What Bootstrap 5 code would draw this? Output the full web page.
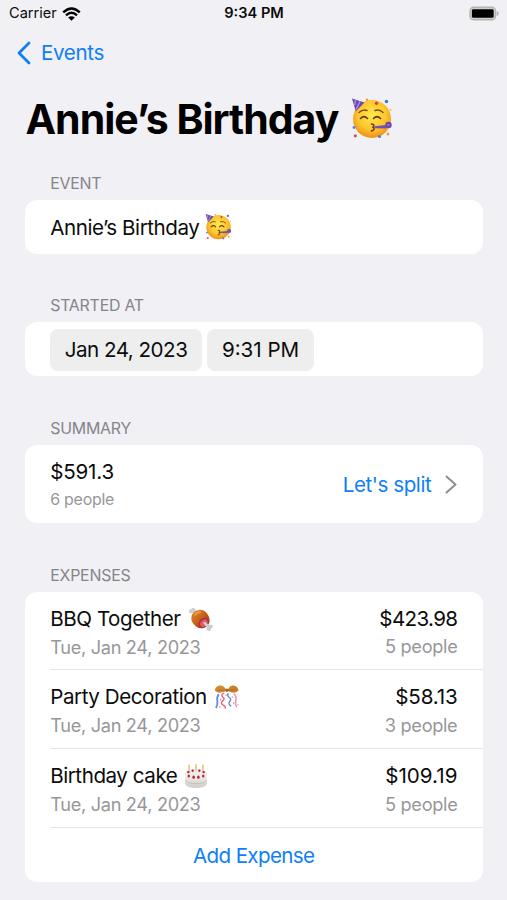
<!DOCTYPE html>
<html lang="en">
<head>
<meta charset="utf-8">
<meta name="viewport" content="width=device-width, initial-scale=1">
<title>Annie’s Birthday</title>
<link href="https://cdn.jsdelivr.net/npm/bootstrap@5.3.0/dist/css/bootstrap.min.css" rel="stylesheet">
<style>
  body { background: #f1f0f5; color: #0c0c0c; font-family: Inter, "Liberation Sans", sans-serif; font-size: 20.6px; line-height: 1.2; letter-spacing: -.45px; overflow: hidden; }
  svg { display: block; flex: none; }
  .tint { color: #0f7ff5; }
  .muted-text { color: #97979a; }
  .statusbar { height: 27px; padding: 1px 8px 0 9px; font-size: 14.6px; letter-spacing: 0; }
  .statusbar > div { flex: 1 1 0; }
  .wifi { margin: -1px 0 0 5px; }
  .battery { margin-top: -1px; }
  .clock { font-weight: 600; }
  .topnav { height: 52px; padding-left: 17px; letter-spacing: -.35px; }
  .topnav span { margin-left: 10px; }
  .page-title { height: 81px; padding-left: 25.5px; font-size: 41px; font-weight: 700; letter-spacing: -1px; color: #000; }
  .page-title svg { margin: -3px 0 0 12.5px; }
  .page-body { padding: 0 24.4px 0 24.8px; }
  .section-label { height: 68.7px; padding: 0 25.4px 6px; font-size: 15.9px; line-height: 20px; letter-spacing: -.22px; color: #858589; }
  .section-label.first { height: 40px; }
  .panel { background: #fff; border-radius: 12px; }
  .panel-row { padding: 2px 25.4px 0; height: 53.8px; }
  .panel-row.tall { height: 78px; }
  .emoji-near { margin: -3px 0 0 6px; }
  .panel-row.pickers { gap: 5.5px; padding-top: 1px; }
  .pill { background: #eee; border-radius: 8px; height: 42px; padding: 1px 14.5px 0; }
  .pill.date { letter-spacing: -.5px; }
  .expense { margin-left: 25.4px; padding: 3px 25.2px 0 0; height: 78.7px; border-bottom: 1px solid #e6e6e8; }
  .lines { gap: 4px; }
  .summary { gap: 5px; }
  .emoji-after { margin: 0 0 0 7px; }
  .chevron { margin-left: 14px; }
  .sub { font-size: 18.2px; letter-spacing: -.32px; line-height: 22px; }
  .sub-sm { font-size: 15.9px; letter-spacing: -.22px; line-height: 20px; }
  .wide { letter-spacing: 0; }
  .semi { letter-spacing: -.2px; }
  .tight { letter-spacing: -.65px; }
  .add-row { padding-top: 3px; }
</style>
</head>
<body>
<svg width="0" height="0" class="position-absolute" aria-hidden="true">
  <defs>
    <radialGradient id="skin" cx=".5" cy=".4" r=".62"><stop offset="0" stop-color="#ffe94f"/><stop offset=".6" stop-color="#fdc72d"/><stop offset="1" stop-color="#ee8a16"/></radialGradient>
    <linearGradient id="meat" x1="0" y1="0" x2="1" y2="1"><stop offset="0" stop-color="#e08a2c"/><stop offset=".5" stop-color="#c4611a"/><stop offset="1" stop-color="#7c2b12"/></linearGradient>
    <linearGradient id="cream" x1="0" y1="0" x2="0" y2="1"><stop offset="0" stop-color="#f6f3ee"/><stop offset="1" stop-color="#cfcbc8"/></linearGradient>
    <symbol id="party-face" viewBox="0 0 42 42">
      <circle cx="21" cy="22" r="19" fill="url(#skin)"/>
      <path d="M1 1.500 13.500 5.500 4.800 14.500Z" fill="#6a49ae"/>
      <path d="M4.500 2.800 3.800 8M9 4.200 5.200 12.500" stroke="#a98be0" stroke-width="1.500"/>
      <path d="M8 15.500q4-3.500 8-2M24 13.500q4.500-1.500 8 2" fill="none" stroke="#7d4a10" stroke-width="1.400" stroke-linecap="round"/>
      <path d="M9.500 21.500q3.500-3.500 7 0M22.500 21.500q3.500-3.500 7 0" fill="none" stroke="#6f3c0a" stroke-width="1.700" stroke-linecap="round"/>
      <path d="M20.500 27q4 .3 1.500 3 3 2-1.500 4" fill="none" stroke="#7a3709" stroke-width="1.600" stroke-linecap="round"/>
      <path d="M23.500 29.300 35 28v3.500l-11.500-.3Z" fill="#7351b3"/>
      <circle cx="37.500" cy="28" r="3.200" fill="#6848a8"/><circle cx="37.500" cy="28" r="1.300" fill="#8f70cf"/>
      <circle cx="35.500" cy="4.500" r="1.700" fill="#2e79d8"/><circle cx="25.500" cy="6.300" r="1.700" fill="#e0404c"/>
      <circle cx="16" cy="2.800" r="1.200" fill="#f79a35"/><circle cx="3" cy="30.500" r="1.400" fill="#3d8be0"/>
      <circle cx="4.300" cy="38.800" r="1.600" fill="#e0475a"/><circle cx="28.500" cy="39.500" r="1.500" fill="#4a78d8"/>
      <circle cx="37" cy="37" r="1.500" fill="#f79a35"/><circle cx="39.500" cy="13" r="1" fill="#f2c045"/>
    </symbol>
    <symbol id="meat-bone" viewBox="0 0 26 26">
      <path d="M.5 5q-.5-3 2-2.500Q3.500 0 6 1q2 1 1.500 3l3 2.500-3 2L5 6Q1.500 8 .5 5Z" fill="#d2d0ce"/>
      <path d="M3 11Q4 3.500 11 3q5.500-.3 8.500 4 3.500 5 2 9.500-2 5-7 5.500Q9 22.500 5.500 18 2.500 15 3 11Z" fill="url(#meat)"/>
      <ellipse cx="15.800" cy="16.500" rx="6" ry="4.800" transform="rotate(-42 15.800 16.500)" fill="#b92d3e"/>
      <ellipse cx="16" cy="16.800" rx="4.300" ry="3.200" transform="rotate(-42 16 16.800)" fill="#dc5c68"/>
      <path d="M15 16.500 17.300 15.300 21 18.700q3.500-1 4.500 1 .3 2-2 2.300 .2 3-2.300 3-3-.5-2.200-3.800Z" fill="#d0cdca"/>
      <path d="M7 8q2-3 5-2.500" fill="none" stroke="#eca04d" stroke-width="2" stroke-linecap="round"/>
    </symbol>
    <symbol id="confetti-ball" viewBox="0 0 26 26">
      <path d="M12.500 5.500Q10 0 5 .6 .8 1.500.3 5.800 3 8.800 7 7.800q4-.3 5.500-2.300Z" fill="#d08a2f"/>
      <path d="M13.500 5.500Q16 0 20 .6q4.700 1 5 5.200-3 3-6.500 2-3.500-.3-5-2.300Z" fill="#c98028"/>
      <path d="M3 5.800q4-1.500 8-.2M15.500 5.600q4-1.500 7.500.2" fill="none" stroke="#9f621b" stroke-width=".6"/>
      <circle cx="13" cy="5.500" r="1.800" fill="#a86719"/>
      <path d="M4.500 9.500Q2 13 3 17q.5 4-1.500 7" fill="none" stroke="#5b8df0" stroke-width="1.900"/>
      <path d="M10 8.500q-4 1.500-1.500 4 3 2 0 4-3 2.500.5 4.500 3 1.500 2 3.500" fill="none" stroke="#ec6386" stroke-width="1.500"/>
      <path d="M14.500 8.500q-2 2.500 .8 4.500 3 2 .2 4.500-1.500 3 2 4.500" fill="none" stroke="#5688e6" stroke-width="1.400"/>
      <path d="M20 9q3.500 3 2 7-.5 4 1 7" fill="none" stroke="#ef8fac" stroke-width="1.500"/>
      <path d="M12 10v1.500M6.500 14v2M18.500 12v1.500M20 18v2M5.500 22v2M24.500 20v1" stroke="#ea7d93" stroke-width="1.100"/>
    </symbol>
    <symbol id="cake" viewBox="0 0 24 26">
      <path d="M.5 10v10.500q2 4.500 11.500 4.500t11.500-4.500V10Z" fill="url(#cream)"/>
      <ellipse cx="12" cy="10" rx="11.500" ry="5" fill="#efebe6"/>
      <path d="M1 17q2.500 3.500 11 3.500T23 17" fill="none" stroke="#bcb8b5" stroke-width=".8"/>
      <path d="M4.800 4v4M19.200 4v4M12 3v4" stroke="#e6b5a5" stroke-width="1.400"/>
      <path d="M4.800 1.500v2.500M12 1v2.500M19.200 1.500v2.500" stroke="#f0c765" stroke-width="1.800" stroke-linecap="round"/>
      <g fill="#b01f38"><circle cx="4" cy="8.500" r="1.200"/><circle cx="8.500" cy="7" r="1.200"/><circle cx="15.500" cy="7" r="1.200"/><circle cx="20" cy="8.500" r="1.200"/><ellipse cx="4.500" cy="12.500" rx="1.200" ry="1.600"/><ellipse cx="9.500" cy="13.700" rx="1.300" ry="1.700"/><ellipse cx="14.500" cy="13.700" rx="1.300" ry="1.700"/><ellipse cx="19.500" cy="12.500" rx="1.200" ry="1.600"/></g>
    </symbol>
  </defs>
</svg>

<header>
  <div class="statusbar d-flex align-items-center">
    <div class="d-flex align-items-center">
      <span>Carrier</span>
      <svg class="wifi" width="19" height="14" viewBox="0 0 19 14" fill="none" stroke="#000" stroke-width="2.400"><path d="M1.200 5.300Q9.500-2.500 17.800 5.300M4 8.300q5.500-4.900 11 0"/><path d="M6.200 10.600q3.300-2.700 6.600 0L9.500 13.800Z" fill="#000" stroke="none"/></svg>
    </div>
    <span class="clock">9:34 PM</span>
    <div class="d-flex justify-content-end">
      <svg class="battery" width="30" height="15" viewBox="0 0 31 15"><rect x="1" y="1" width="26.500" height="13" rx="4" fill="#d0d0d0" stroke="#b4b4b3" stroke-width="1.400"/><rect x="3" y="3" width="22.500" height="9" rx="1.500"/><path d="M28.800 5q2 .8 2 2.500t-2 2.500Z" fill="#b4b4b3"/></svg>
    </div>
  </div>
  <nav class="topnav d-flex align-items-center tint">
    <svg width="14" height="24" viewBox="0 0 14 24" fill="none" stroke="currentColor" stroke-width="2.800" stroke-linecap="round" stroke-linejoin="round"><path d="M12 2 2 12l10 10"/></svg>
    <span>Events</span>
  </nav>
  <h1 class="page-title d-flex align-items-center m-0">
    <span>Annie’s Birthday</span>
    <svg width="42" height="42"><use href="#party-face"/></svg>
  </h1>
</header>

<main class="page-body">
  <div class="section-label first d-flex align-items-end">EVENT</div>
  <section class="panel panel-row d-flex align-items-center">
    <span>Annie’s Birthday</span>
    <svg class="emoji-near" width="27" height="27"><use href="#party-face"/></svg>
  </section>

  <div class="section-label d-flex align-items-end">STARTED AT</div>
  <section class="panel panel-row pickers d-flex align-items-center">
    <span class="pill date d-flex align-items-center">Jan 24, 2023</span>
    <span class="pill d-flex align-items-center wide">9:31 PM</span>
  </section>

  <div class="section-label d-flex align-items-end">SUMMARY</div>
  <section class="panel panel-row tall d-flex align-items-center justify-content-between">
    <div class="summary d-flex flex-column align-items-start">
      <span class="semi">$591.3</span>
      <span class="sub-sm muted-text">6 people</span>
    </div>
    <div class="d-flex align-items-center tint">
      <span>Let's split</span>
      <svg class="chevron" width="12" height="19" viewBox="0 0 12 19" fill="none" stroke="#8e8e92" stroke-width="2" stroke-linecap="round" stroke-linejoin="round"><path d="M1.500 1.500l9 8-9 8"/></svg>
    </div>
  </section>

  <div class="section-label d-flex align-items-end">EXPENSES</div>
  <section class="panel">
    <div class="expense d-flex align-items-center justify-content-between">
      <div class="lines d-flex flex-column align-items-start">
        <div class="d-flex align-items-center">BBQ Together<svg class="emoji-after" width="26" height="25"><use href="#meat-bone"/></svg></div>
        <span class="sub muted-text">Tue, Jan 24, 2023</span>
      </div>
      <div class="lines d-flex flex-column align-items-end"><span class="tight">$423.98</span><span class="sub muted-text">5 people</span></div>
    </div>
    <div class="expense d-flex align-items-center justify-content-between">
      <div class="lines d-flex flex-column align-items-start">
        <div class="d-flex align-items-center">Party Decoration<svg class="emoji-after" width="26" height="25"><use href="#confetti-ball"/></svg></div>
        <span class="sub muted-text">Tue, Jan 24, 2023</span>
      </div>
      <div class="lines d-flex flex-column align-items-end"><span class="semi">$58.13</span><span class="sub muted-text">3 people</span></div>
    </div>
    <div class="expense d-flex align-items-center justify-content-between">
      <div class="lines d-flex flex-column align-items-start">
        <div class="d-flex align-items-center">Birthday cake<svg class="emoji-after" width="24" height="25"><use href="#cake"/></svg></div>
        <span class="sub muted-text">Tue, Jan 24, 2023</span>
      </div>
      <div class="lines d-flex flex-column align-items-end"><span class="wide">$109.19</span><span class="sub muted-text">5 people</span></div>
    </div>
    <div class="panel-row add-row d-flex align-items-center justify-content-center tint tight">Add Expense</div>
  </section>
</main>
<script src="https://cdn.jsdelivr.net/npm/bootstrap@5.3.0/dist/js/bootstrap.bundle.min.js"></script>
</body>
</html>
